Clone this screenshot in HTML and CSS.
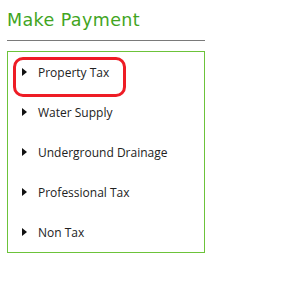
FILE: index.html
```html
<!DOCTYPE html>
<html lang="en">

<head>
   <meta charset="UTF-8" />
   <title>Make Payment</title>
   <link rel="stylesheet" href="styles.css">
</head>

<body>
   <div class="panel">
      <h2 class="title">Make Payment</h2>

      <ul class="pay-list">
         <li class="pay-item selected"><span class="arrow"></span>Property Tax</li>
         <li class="pay-item"><span class="arrow"></span>Water Supply</li>
         <li class="pay-item"><span class="arrow"></span>Underground Drainage</li>
         <li class="pay-item"><span class="arrow"></span>Professional Tax</li>
         <li class="pay-item"><span class="arrow"></span>Non Tax</li>
      </ul>
   </div>
</body>

</html>
```

FILE: styles.css
```css
* {
   box-sizing: border-box;
   margin: 0;
   padding: 0;
}

body {
   font-family: 'Open Sans', 'Noto Sans', sans-serif;
   background: #ffffff;
   color: #222222;
}

.panel {
   width: 205px;
   padding: 8px 0 0 7px;
}

.title {
   font-family: 'DejaVu Sans', sans-serif;
   font-weight: normal;
   font-size: 17.5px;
   letter-spacing: 0.4px;
   color: #42a51f;
   height: 33px;
   line-height: 24px;
   border-bottom: 1px solid #7a7a7a;
}

.pay-list {
   list-style: none;
   margin-top: 10px;
   border: 1px solid #6cc33a;
   padding: 0;
}

.pay-item {
   position: relative;
   display: flex;
   align-items: center;
   height: 40px;
   padding-left: 14px;
   font-size: 12px;
}

.arrow {
   width: 0;
   height: 0;
   border-top: 4px solid transparent;
   border-bottom: 4px solid transparent;
   border-left: 5px solid #111111;
   margin-right: 11px;
}

.selected::after {
   content: "";
   position: absolute;
   left: 5px;
   top: 5px;
   width: 107px;
   height: 34px;
   border: 3px solid #ee1c25;
   border-radius: 10px;
}
```
